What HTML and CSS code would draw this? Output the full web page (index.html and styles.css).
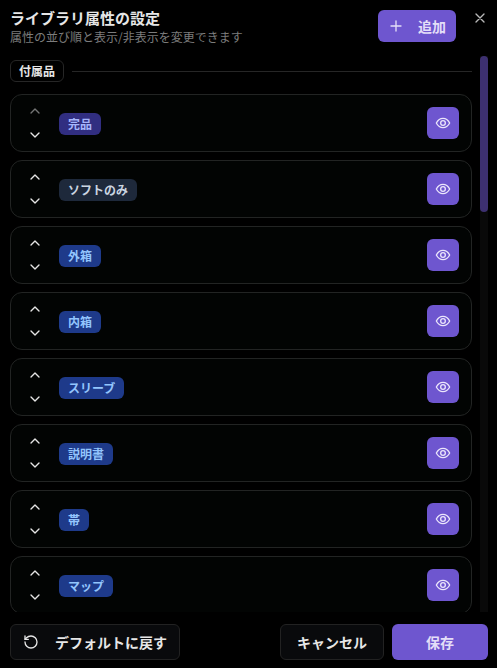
FILE: index.html
```html
<!DOCTYPE html>
<html lang="ja">
<head>
  <meta charset="UTF-8" />
  <meta name="viewport" content="width=device-width, initial-scale=1.0" />
  <title>ライブラリ属性の設定</title>
  <link rel="stylesheet" href="styles.css">
</head>
<body>
  <svg class="sprite" aria-hidden="true">
    <symbol id="icon-up" viewBox="0 0 24 24"><path d="m18 15-6-6-6 6" /></symbol>
    <symbol id="icon-down" viewBox="0 0 24 24"><path d="m6 9 6 6 6-6" /></symbol>
    <symbol id="icon-eye" viewBox="0 0 24 24">
      <path d="M2 12C4.300 7.600 7.800 5 12 5s7.700 2.600 10 7c-2.300 4.400-5.800 7-10 7S4.300 16.400 2 12Z" />
      <circle cx="12" cy="12" r="3.500" />
    </symbol>
  </svg>

  <main class="dialog">
    <header class="header">
      <div class="heading">
        <h1>ライブラリ属性の設定</h1>
        <p>属性の並び順と表示/非表示を変更できます</p>
      </div>
      <button class="btn btn-primary btn-add">
        <svg class="icon" viewBox="0 0 24 24"><path d="M4.500 12h15M12 4.500v15" /></svg>
        追加
      </button>
      <button class="close" aria-label="閉じる">
        <svg class="icon" viewBox="0 0 24 24"><path d="M6 6l12 12M18 6 6 18" /></svg>
      </button>
    </header>

    <div class="scroll-area">
      <section class="group">
        <div class="group-title">
          <h2>付属品</h2>
          <hr>
        </div>
        <ul class="list" id="list"></ul>
      </section>
      <div class="scrollbar"><div class="thumb"></div></div>
    </div>

    <footer class="footer">
      <button class="btn btn-outline btn-reset">
        <svg class="icon" viewBox="0 0 24 24"><path d="M3 12a9 9 0 1 0 9-9 9.750 9.750 0 0 0-6.740 2.740L3 8" /><path d="M3 3v5h5" /></svg>
        デフォルトに戻す
      </button>
      <button class="btn btn-outline">キャンセル</button>
      <button class="btn btn-primary btn-save">保存</button>
    </footer>
  </main>

  <script>
    const list = document.getElementById('list');
    const items = [
      { name: '完品', color: 'indigo' },
      { name: 'ソフトのみ', color: 'slate' },
      { name: '外箱', color: 'blue' },
      { name: '内箱', color: 'blue' },
      { name: 'スリーブ', color: 'blue' },
      { name: '説明書', color: 'blue' },
      { name: '帯', color: 'blue' },
      { name: 'マップ', color: 'blue' }
    ];

    items.forEach((item, i) => {
      const row = document.createElement('li');
      row.classList.add('item');
      row.innerHTML = `
        <div class="order">
          <button aria-label="${item.name}を上へ" ${i === 0 ? 'disabled' : ''}><svg class="icon"><use href="#icon-up" /></svg></button>
          <button aria-label="${item.name}を下へ"><svg class="icon"><use href="#icon-down" /></svg></button>
        </div>
        <span class="tag ${item.color}">${item.name}</span>
        <button class="toggle" aria-label="${item.name}の表示を切り替え"><svg class="icon"><use href="#icon-eye" /></svg></button>`;
      list.appendChild(row);
    });
  </script>
</body>
</html>
```

FILE: styles.css
```css
* {
  box-sizing: border-box;
}
body {
  margin: 0;
  background: #000;
  color: #e6e6e6;
  font-family: "Noto Sans CJK JP", sans-serif;
}
h1, h2, p, ul {
  margin: 0;
  padding: 0;
}
button {
  padding: 0;
  border: none;
  background: none;
  color: inherit;
  font-family: inherit;
  cursor: pointer;
}
.sprite {
  display: none;
}
.icon {
  display: block;
  flex-shrink: 0;
  width: 16px;
  height: 16px;
  fill: none;
  stroke: currentColor;
  stroke-width: 2;
  stroke-linecap: round;
  stroke-linejoin: round;
}

.dialog {
  display: flex;
  flex-direction: column;
  height: 100vh;
  padding: 8px 9px 8px 10px;
}

/* header */
.header {
  display: flex;
  align-items: flex-start;
  gap: 16px;
  padding-bottom: 10px;
}
.heading {
  flex: 1;
}
h1 {
  font-size: 15px;
  line-height: 20px;
  font-weight: bold;
}
.heading p {
  color: #7c7c7c;
  font-size: 12px;
  line-height: 18px;
}
.close {
  padding-top: 2px;
  color: #b8b8b8;
}

/* buttons */
.btn {
  display: flex;
  align-items: center;
  justify-content: center;
  height: 36px;
  padding: 0 16px;
  border-radius: 6px;
  font-size: 14px;
  font-weight: bold;
  white-space: nowrap;
}
.btn-primary {
  background: #6e56cf;
  color: #e4def8;
}
.btn-outline {
  border: 1px solid #222;
  background: #090a0c;
}
.btn-add {
  gap: 14px;
  height: 32px;
  margin-top: 2px;
  padding: 0 10px;
}
.btn-reset {
  gap: 16px;
  margin-right: auto;
  padding: 0 12px;
}
.btn-save {
  min-width: 96px;
}

/* list */
.scroll-area {
  display: flex;
  flex: 1;
  gap: 8px;
  min-height: 0;
  overflow: hidden;
}
.group {
  flex: 1;
  padding-top: 4px;
}
.group-title {
  display: flex;
  align-items: center;
  gap: 8px;
  margin-bottom: 12px;
}
h2 {
  padding: 0 8px;
  border: 1px solid #262626;
  border-radius: 6px;
  font-size: 12px;
  line-height: 20px;
  font-weight: bold;
}
hr {
  flex: 1;
  height: 1px;
  margin: 0;
  border: none;
  background: #262626;
}
.list {
  display: flex;
  flex-direction: column;
  gap: 8px;
  list-style: none;
}
.item {
  display: flex;
  align-items: center;
  gap: 12px;
  padding: 4px 12px;
  border: 1px solid #222423;
  border-radius: 12px;
  background: #020403;
}
.order button {
  display: flex;
  align-items: center;
  justify-content: center;
  width: 24px;
  height: 24px;
}
.order button:disabled {
  opacity: 0.5;
}
.tag {
  margin-top: 2px;
  padding: 0 9px;
  border-radius: 6px;
  font-size: 12px;
  line-height: 22px;
  font-weight: bold;
}
.indigo {
  background: #312e81;
  color: #a5b4fc;
}
.slate {
  background: #1e293b;
  color: #cbd5e1;
}
.blue {
  background: #1e3a8a;
  color: #93c5fd;
}
.toggle {
  display: flex;
  align-items: center;
  justify-content: center;
  width: 32px;
  height: 32px;
  margin-left: auto;
  border-radius: 6px;
  background: #6e56cf;
  color: #ebe6fb;
}
.scrollbar {
  width: 8px;
  background: #090909;
}
.thumb {
  height: 28%;
  border-radius: 4px;
  background: #3d3070;
}

/* footer */
.footer {
  display: flex;
  gap: 8px;
  padding-top: 12px;
}
```
